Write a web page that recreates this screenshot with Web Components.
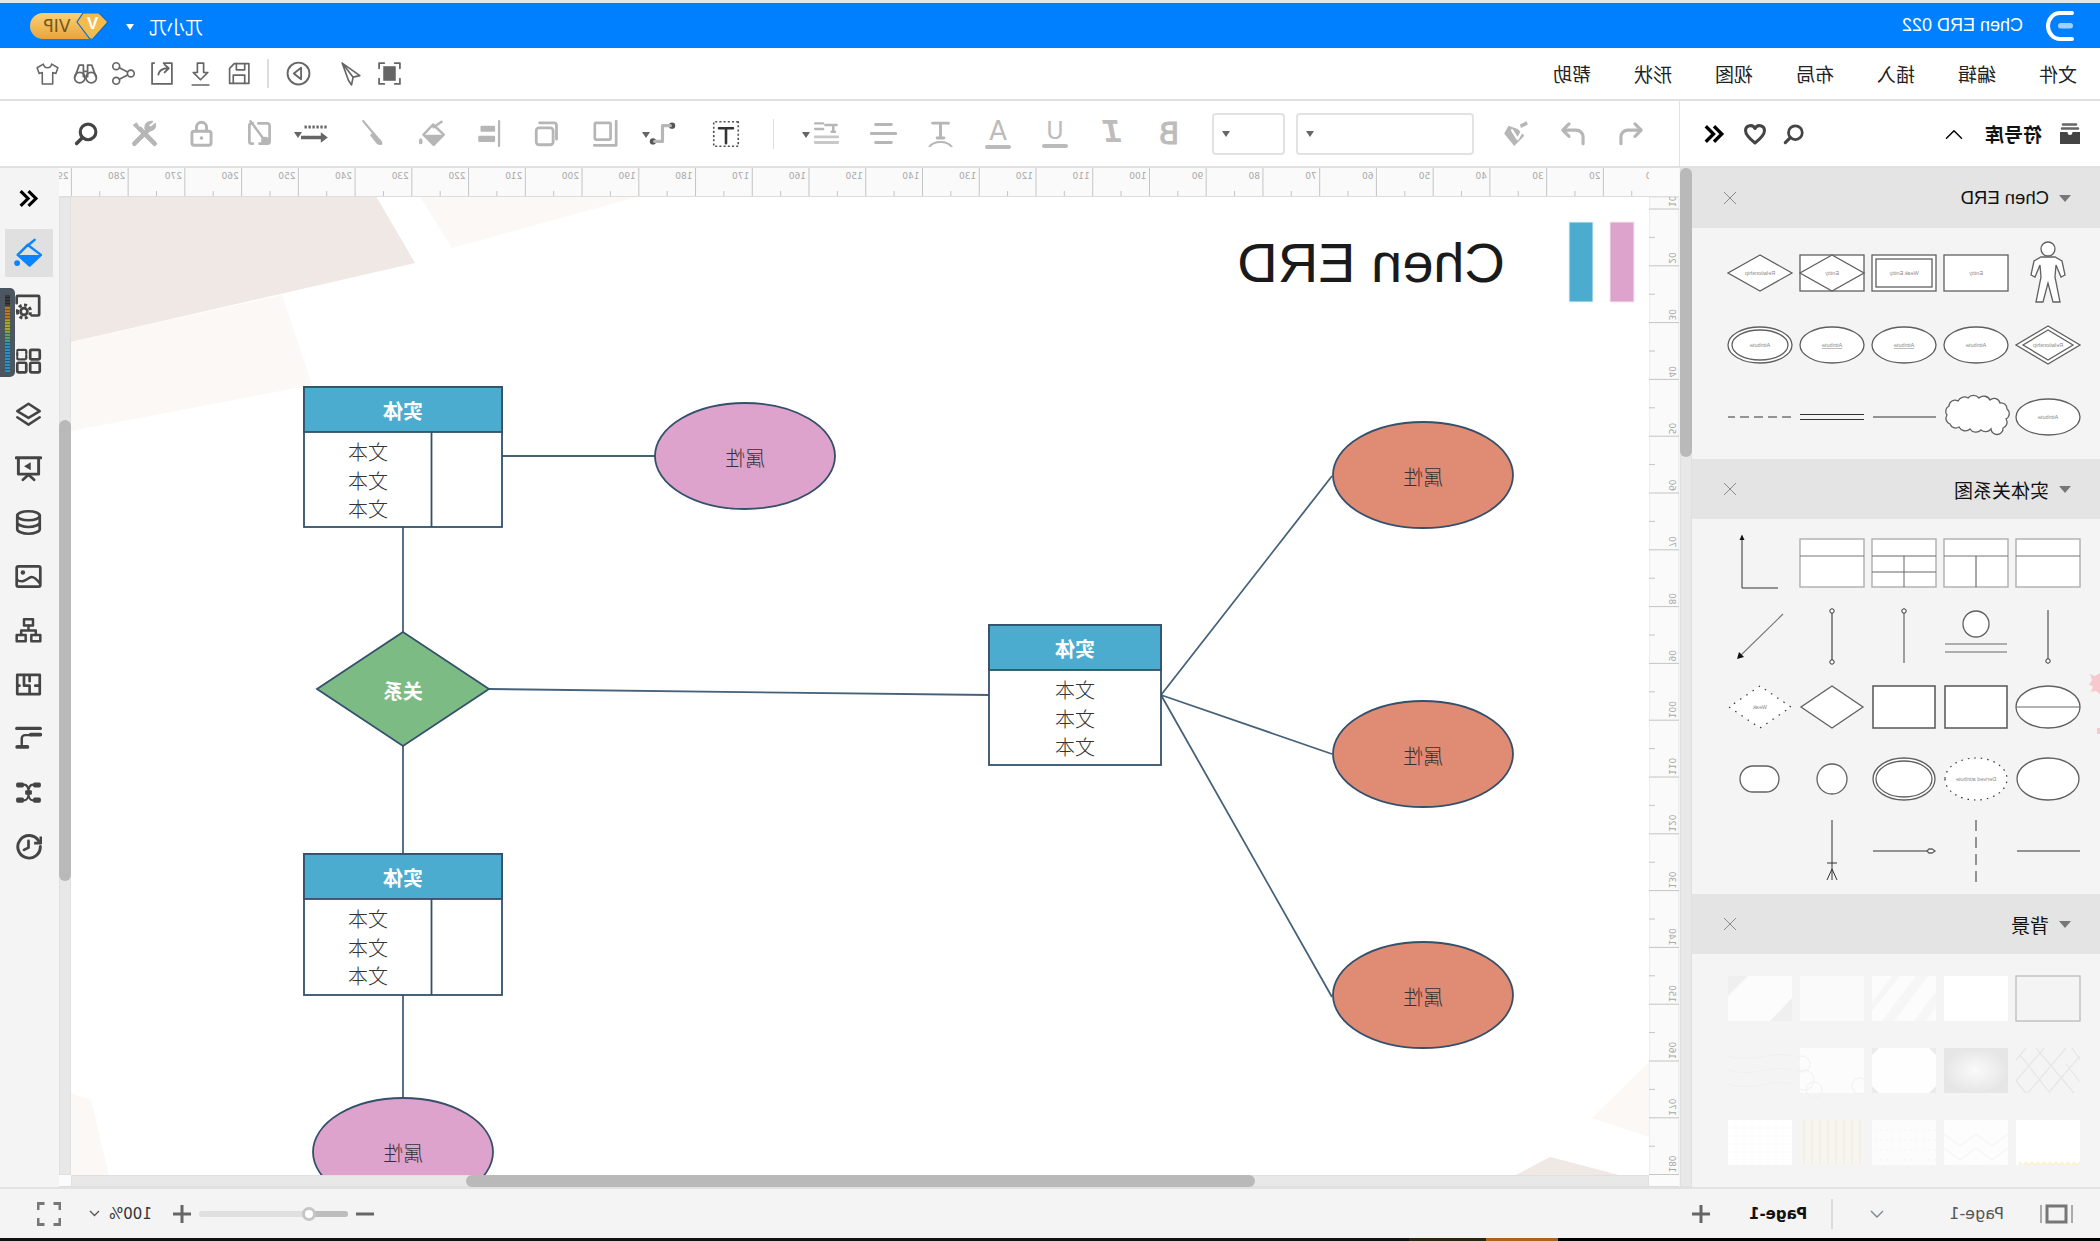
<!DOCTYPE html>
<html lang="zh">
<head>
<meta charset="utf-8">
<title>Chen ERD 022</title>
<style>
  html, body { margin: 0; padding: 0; background: #f4f4f4; overflow: hidden; }
  body { width: 2100px; height: 1241px; font-family: "Liberation Sans", "Noto Sans CJK SC", sans-serif; }
</style>
</head>
<body>
<edraw-app>
  <title-bar></title-bar>
  <menu-bar></menu-bar>
  <tool-bar></tool-bar>
  <main-row>
    <symbol-panel>
      <panel-section label="Chen ERD" height="231" pad="9" size="18.5">
        <shape-cell kind="person"></shape-cell><shape-cell kind="entity"></shape-cell><shape-cell kind="weak"></shape-cell><shape-cell kind="assoc"></shape-cell><shape-cell kind="rel"></shape-cell>
        <shape-cell kind="rel2"></shape-cell><shape-cell kind="attr"></shape-cell><shape-cell kind="attrU"></shape-cell><shape-cell kind="attrU"></shape-cell><shape-cell kind="attr2"></shape-cell>
        <shape-cell kind="attr"></shape-cell><shape-cell kind="cloud"></shape-cell><shape-cell kind="line"></shape-cell><shape-cell kind="line2"></shape-cell><shape-cell kind="dash"></shape-cell>
      </panel-section>
      <panel-section label="实体关系图" height="375" pad="8" size="19">
        <shape-cell kind="tbl"></shape-cell><shape-cell kind="tblSplit"></shape-cell><shape-cell kind="tblGrid"></shape-cell><shape-cell kind="tbl"></shape-cell><shape-cell kind="axis"></shape-cell>
        <shape-cell kind="vBottom"></shape-cell><shape-cell kind="circleLines"></shape-cell><shape-cell kind="vTop"></shape-cell><shape-cell kind="vBoth"></shape-cell><shape-cell kind="diag"></shape-cell>
        <shape-cell kind="ellLine"></shape-cell><shape-cell kind="box"></shape-cell><shape-cell kind="box"></shape-cell><shape-cell kind="dia"></shape-cell><shape-cell kind="weakDia"></shape-cell>
        <shape-cell kind="ell"></shape-cell><shape-cell kind="derived"></shape-cell><shape-cell kind="ell2"></shape-cell><shape-cell kind="circle"></shape-cell><shape-cell kind="pill"></shape-cell>
        <shape-cell kind="line"></shape-cell><shape-cell kind="vDash"></shape-cell><shape-cell kind="hDot"></shape-cell><shape-cell kind="crow"></shape-cell><shape-cell></shape-cell>
      </panel-section>
      <panel-section label="背景" height="233" pad="8" size="19">
        <shape-cell kind="bgOutline"></shape-cell><shape-cell kind="bgWhite"></shape-cell><shape-cell kind="bgStripes"></shape-cell><shape-cell kind="bgSoft"></shape-cell><shape-cell kind="bgCorners"></shape-cell>
        <shape-cell kind="bgCross"></shape-cell><shape-cell kind="bgRadial"></shape-cell><shape-cell kind="bgVignette"></shape-cell><shape-cell kind="bgCircles"></shape-cell><shape-cell kind="bgWaves"></shape-cell>
        <shape-cell kind="bgYellow"></shape-cell><shape-cell kind="bgZig"></shape-cell><shape-cell kind="bgDots"></shape-cell><shape-cell kind="bgBeige"></shape-cell><shape-cell kind="bgGrid"></shape-cell>
      </panel-section>
    </symbol-panel>
    <scroll-v top="0" len="289"></scroll-v>
    <editor-area>
      <ruler-corner></ruler-corner>
      <ruler-top></ruler-top>
      <ruler-side></ruler-side>
      <erd-canvas></erd-canvas>
      <scroll-v top="223" len="461"></scroll-v>
      <ruler-corner></ruler-corner>
      <scroll-h></scroll-h>
      <ruler-corner></ruler-corner>
    </editor-area>
    <side-rail></side-rail>
  </main-row>
  <status-bar></status-bar>
</edraw-app>

<script>
// every icon is drawn as the plain (unflipped) app has it, the whole page is flipped by edraw-app
const ICONS = {
  search: '<circle cx="10.5" cy="10.5" r="7.5" stroke-width="3"/><path d="M16 16l5.5 5.5" stroke-width="3.4"/>',
  tools: '<path d="M21 21L8 8" stroke-width="4.2"/><path d="M3 21L16 8" stroke-width="4.2"/><path d="M9.5 9A5 5 0 0 1 2.500 3.500L6.500 7 9 4.500 5 1.500a5.500 5.500 0 0 1 6.500 6z" fill="currentColor" stroke-width="1.500"/><path d="M15 8.500L19 2l3.500 2.500L17 10z" fill="currentColor" stroke="none"/>',
  lock: '<rect x="3.5" y="10" width="17" height="12.5" rx="2" stroke-width="2.6"/><path d="M7.5 10V6.5a4.5 4.5 0 0 1 9 0V10" stroke-width="2.6"/><circle cx="12" cy="16" r="1.6" fill="currentColor" stroke="none"/>',
  noimg: '<path d="M13 3H5a2 2 0 0 0-2 2v14a2 2 0 0 0 2 2h7M18 3h1a2 2 0 0 1 2 2v14a2 2 0 0 1-2 2h-1" stroke-width="2.400"/><path d="M20 1L9 16" stroke-width="2.200"/><circle cx="7" cy="18.500" r="3.600" fill="currentColor" stroke="none"/>',
  linestyle: '<path d="M2 6h20" stroke="#666" stroke-width="2.400" stroke-dasharray="2 1.400" stroke-linecap="butt"/><path d="M6 15h18" stroke="#666" stroke-width="3"/><path d="M7 10.500L1 15l6 4.500z" fill="#666" stroke="none"/>',
  brush: '<path d="M22 1L12 13" stroke-width="2"/><path d="M13 10.500l3 3-6 7.500c-2 1.500-5 1.500-5 0 0-2 1-3 2-4z" fill="currentColor" stroke="none"/>',
  fill: '<path d="M4 1.500l7 5M11.500 4L2 13l9 9 9-9z" stroke-width="2.200"/><path d="M2 13h18l-9 9z" fill="currentColor" stroke="none"/><path d="M23 17c1 2 1 4-.5 4s-1.500-2-.5-4z" fill="currentColor" stroke-width="1"/>',
  align: '<path d="M3.500 1v22" stroke-width="2"/><rect x="7" y="5" width="13" height="5.500" rx="1" fill="currentColor" stroke="none"/><rect x="7" y="14" width="15" height="5.500" rx="1" fill="currentColor" stroke="none"/>',
  copy: '<rect x="7" y="7" width="15" height="15" rx="2.500" stroke-width="2.500"/><path d="M4 17V4.500a2 2 0 0 1 2-2h13" stroke-width="2.500"/>',
  frame: '<rect x="7.500" y="2.500" width="14" height="15" rx="1" stroke-width="2.400"/><path d="M2.500 1v21.500H22" stroke-width="2.400"/>',
  connector: '<circle cx="3.500" cy="5" r="2.800" fill="#555" stroke="none"/><circle cx="20.500" cy="19" r="2.800" fill="#555" stroke="none"/><path d="M5 5h7v14h7" stroke-width="2.800"/>',
  tbox: '<rect x="1.500" y="1.500" width="21" height="21" stroke="#555" stroke-dasharray="1.800 1.800" stroke-width="1.400" stroke-linecap="butt"/><path d="M6 7h12M12 7v13" stroke="#333" stroke-width="2.200"/>',
  spacing: '<path d="M2 4.500h10M5 4.500v6M3.500 10.500h3" transform="translate(1 0)" stroke-width="2.200"/><path d="M15 3h7M15 8h7" stroke-width="2.200"/><path d="M2 15h20M2 20h20" stroke-width="2.600" stroke="#c8c8c8"/>',
  center: '<path d="M5 4h14M1 12h22M5 20h14" stroke-width="2.600"/>',
  tarc: '<path d="M5 3v-.200h14M12 3v13M9 16h6" stroke-width="2.600"/><path d="M2 24c4-6 16-6 20 0" stroke-width="1.800"/>',
  paint: '<path d="M11 8l8-3 4 7-9 11-9-9z" fill="currentColor" stroke="none"/><path d="M3 1l6 3-1 3-6-3z" fill="currentColor" stroke="none"/><path d="M6 8l5 9 5-8" stroke="#fff" stroke-width="2"/>',
  undo: '<path d="M8 3.500L2.500 9 8 14.500" stroke-width="2.800"/><path d="M3 9h11.500a6 6 0 0 1 6 6v6" stroke-width="2.800"/>',
  redo: '<path d="M16 3.500L21.500 9 16 14.500" stroke-width="2.800"/><path d="M21 9H9.500a6 6 0 0 0-6 6v6" stroke-width="2.800"/>',
  chevrons: '<path d="M12 3.500L3.500 12l8.500 8.500M21 3.500L12.500 12l8.500 8.500" stroke-width="3.600" stroke-linecap="butt" stroke-linejoin="miter"/>',
  heart: '<path d="M12 21C5 15.500 2.500 12 2.500 8.500A5 5 0 0 1 12 6.500a5 5 0 0 1 9.500 2C21.500 12 19 15.500 12 21z" stroke-width="3"/>',
  up: '<path d="M3 17L12 8l9 9" stroke-width="1.700"/>',
  library: '<path d="M6 2.500h13M4 6.500h16" stroke="#666" stroke-width="2.600"/><path d="M2 10h7.500c0 2 1 3 2.500 3s2.500-1 2.500-3H22v12H2z" fill="currentColor" stroke="none"/>',
  shirt: '<path d="M8 3L2 6.500l2 5.500 3-1v11h10V11l3 1 2-5.500L16 3c-.500 2.500-2 3.500-4 3.500S8.500 5.500 8 3z" stroke-width="1.500"/>',
  binoculars: '<circle cx="6.500" cy="16" r="5" stroke-width="1.700"/><circle cx="17.500" cy="16" r="5" stroke-width="1.700"/><path d="M2 15L6 4h4v11M22 15L18 4h-4v11M10 10h4M11.500 16h1" stroke-width="1.700"/>',
  share: '<circle cx="5" cy="12" r="3.300" stroke-width="1.600"/><circle cx="19" cy="5" r="3.300" stroke-width="1.600"/><circle cx="19" cy="19" r="3.300" stroke-width="1.600"/><path d="M8 10.500l8-4M8 13.500l8 4" stroke-width="1.600"/>',
  exporting: '<path d="M11 2H3v20h19V2h-2" stroke-width="1.700"/><path d="M8 11c1-4 4-6 9-6M14 1.500L18 5l-4 4" transform="matrix(-1 0 0 1 24 2)" stroke-width="1.800"/>',
  download: '<path d="M9 2h6v9h4l-7 7-7-7h4zM4 23h16" stroke-width="1.600"/>',
  save: '<path d="M3 2.500h14l4.500 4.500v14.500H3z" stroke-width="1.600"/><path d="M7 2.500v6h8v-6M7 21.500v-8h11v8" stroke-width="1.600"/>',
  play: '<circle cx="12" cy="12" r="10.500" stroke-width="1.800"/><path d="M9.500 6.500l7 5.500-7 5.500z" stroke-width="1.800"/>',
  cursor: '<path d="M20 2L3 14l6.500 1.500L11 23l3-4.500zM9.500 15.500L20 2" stroke-width="1.600"/>',
  focus: '<path d="M2 7V2h5M17 2h5v5M22 17v5h-5M7 22H2v-5" stroke-width="1.700"/><rect x="6" y="5" width="12" height="14" fill="currentColor" stroke="none"/>',
  bucket: '<path d="M7.500 1.500l5.500 4.500" stroke-width="2"/><path d="M13 5.500L2.500 13.500 11.500 22 21 13.500z" stroke-width="2"/><path d="M2.500 13.500H21L12.800 21c-1 .8-1.800 .8-2.800 0z" fill="currentColor" stroke="none"/><circle cx="21.500" cy="20" r="2.300" fill="currentColor" stroke="none"/>',
  screen: '<path d="M9 20H3.500a1 1 0 0 1-1-1V3.500a1 1 0 0 1 1-1h18a1 1 0 0 1 1 1V9" stroke-width="2.400"/><circle cx="16" cy="16.500" r="3" stroke-width="2.400"/><circle cx="16" cy="16.500" r="5.800" stroke-width="2.800" stroke-dasharray="2.600 2.200" stroke-linecap="butt"/>',
  grid: '<rect x="2" y="2.500" width="8.500" height="8.500" rx="1" stroke-width="2.400"/><rect x="14" y="2.500" width="8" height="8.500" rx="1" stroke-width="2" stroke-dasharray="3 1.500"/><rect x="2" y="14" width="8.500" height="8.500" rx="1" stroke-width="2.400"/><rect x="14" y="14" width="8" height="8.500" rx="1" stroke-width="2.400"/>',
  layers: '<path d="M12 2.500L22 9l-10 6L2 9z" stroke-width="2.200"/><path d="M2 14.500L12 21l10-6.500" stroke-width="2.200"/>',
  board: '<path d="M1 2.500h22" stroke-width="2.600"/><path d="M3 3v14h18V3" stroke-width="2.600"/><path d="M7 22l5-4.500 5 4.500" stroke-width="2.400"/><path d="M10 6.500l6 3.500-6 3.500z" fill="currentColor" stroke="none"/>',
  db: '<ellipse cx="12" cy="6" rx="10" ry="4" stroke-width="2.400"/><path d="M2 6v12c0 2 4.500 4 10 4s10-2 10-4V6M2 12c0 2 4.500 4 10 4s10-2 10-4" stroke-width="2.400"/>',
  picture: '<rect x="1.500" y="3" width="21" height="18" rx="1.500" stroke-width="2.400"/><circle cx="17" cy="8.500" r="2" fill="currentColor" stroke="none"/><path d="M2 18c3-4 6-7 9-5 3 2 7 5 11 2" stroke-width="2.200"/>',
  org: '<rect x="8" y="2" width="8" height="5.500" stroke-width="2.200"/><rect x="1.500" y="16" width="8" height="5.500" stroke-width="2.200"/><rect x="14.500" y="16" width="8" height="5.500" stroke-width="2.200"/><path d="M12 7.500V12M5.500 16v-4h13v4" stroke-width="2.200"/>',
  plan: '<path d="M2 3.500h20v17H2zM2 13h4M11 13h5V8M16 3.500V8M22 13h-2M11 13v7.500M11 3.500V9" stroke-width="2.400"/>',
  flow: '<path d="M1.500 3h21" stroke-width="2.800"/><path d="M1.500 8.500H10" stroke-width="3.400"/><path d="M10 9h5a3 3 0 0 1 3 3v5" stroke-width="2.200"/><path d="M13 19.500h9" stroke-width="3.400"/>',
  mindmap: '<rect x="9" y="10" width="6" height="4" rx="1" fill="currentColor" stroke="none"/><rect x="1" y="3" width="7" height="4.500" rx="1.500" fill="currentColor" stroke="none"/><rect x="16" y="3" width="7" height="4.500" rx="1.500" fill="currentColor" stroke="none"/><rect x="1" y="16.500" width="7" height="4.500" rx="1.500" fill="currentColor" stroke="none"/><rect x="16" y="16.500" width="7" height="4.500" rx="1.500" fill="currentColor" stroke="none"/><path d="M8 5c3 0 4 3 4 7s1 7 4 7M16 5c-3 0-4 3-4 7s-1 7-4 7" stroke-width="1.800"/>',
  history: '<path d="M21 7A10 10 0 1 0 22.500 12" transform="matrix(-1 0 0 1 24 0)" stroke-width="2.600"/><path d="M1 3v6h6" stroke-width="2.400" stroke-linecap="butt"/><path d="M12 7v6l-4 2" transform="matrix(-1 0 0 1 24 0)" stroke-width="2.400"/>'
};

class UiIcon extends HTMLElement {
  constructor() {
    super();
    this.attachShadow({ mode: "open" });
  }
  connectedCallback() {
    const size = this.getAttribute("size") || 24;
    const name = this.getAttribute("name");
    this.shadowRoot.innerHTML = `
      <style>
        :host { display: inline-flex; flex: none; color: #444; line-height: 0; }
        :host([tone="off"]) { color: #b6b6b6; }
        :host([tone="mid"]) { color: #666; }
        :host([tone="ink"]) { color: #000; }
        :host([tone="blue"]) { color: #0a84ff; }
      </style>
      <svg width="${size}" height="${size}" viewBox="0 0 24 24" fill="none" stroke="currentColor" stroke-width="2" stroke-linecap="round" stroke-linejoin="round">${ICONS[name] || ""}</svg>`;
  }
}
customElements.define("ui-icon", UiIcon);

class EdrawApp extends HTMLElement {
  constructor() {
    super();
    this.attachShadow({ mode: "open" });
    // the reference is a left-right mirrored picture, so the plain layout gets flipped here
    this.shadowRoot.innerHTML = `
      <style>
        :host { display: flex; flex-direction: column; width: 2100px; height: 1241px; overflow: hidden;
                transform: scaleX(-1); background: #f4f4f4; color: #222; }
        .sliver { height: 3px; background: #e6e6e6; flex: none; }
        .film { height: 3px; flex: none; background: linear-gradient(90deg, #000 542px, #a86420 542px, #a86420 614px, #2a2410 614px, #2a2410 691px, #111 691px); }
      </style>
      <div class="sliver"></div>
      <slot></slot>
      <div class="film"></div>`;
  }
}
customElements.define("edraw-app", EdrawApp);

class TitleBar extends HTMLElement {
  constructor() {
    super();
    this.attachShadow({ mode: "open" });
    this.shadowRoot.innerHTML = `
      <style>
        :host { display: flex; align-items: center; height: 45px; flex: none; background: #0080ff; color: #fff; padding: 0 30px 0 26px; box-sizing: border-box; }
        .doc { margin-left: 23px; font: 18px "Liberation Sans", sans-serif; }
        .user { margin-left: auto; font: 18px "Noto Sans CJK SC", sans-serif; }
        .caret { margin: 2px 0 0 15px; border: 4.5px solid transparent; border-top: 6px solid #fff; border-bottom: 0; }
        .vip { margin-left: 17px; display: block; }
      </style>
      <svg width="28" height="32" viewBox="0 0 28 32" fill="none">
        <path d="M2 3h12a12 13 0 0 1 0 26H2" stroke="#fff" stroke-width="4" stroke-linecap="round"/>
        <rect x="1" y="13" width="15" height="5.500" rx="2.700" fill="#9fd0ff"/>
      </svg>
      <span class="doc">Chen ERD 022</span>
      <span class="user">兀小兀</span>
      <span class="caret"></span>
      <svg class="vip" width="79" height="26" viewBox="0 0 79 26">
        <defs><linearGradient id="gold" x1="0" y1="0" x2="0" y2="1"><stop offset="0" stop-color="#fbd078"/><stop offset="1" stop-color="#e8a53a"/></linearGradient></defs>
        <path d="M20 0h46a13 13 0 0 1 0 26H20z" fill="url(#gold)"/>
        <path d="M10 0h16l6 9-13 17h-3L1 9z" fill="#f6bb4a" stroke="#0a6fd8" stroke-width="1.200"/>
        <text x="16.500" y="16" text-anchor="middle" font-family="Liberation Sans" font-weight="700" font-size="17" fill="#fff">V</text>
        <text x="52" y="19" text-anchor="middle" font-family="DejaVu Sans" font-size="17" fill="#75561c">VIP</text>
      </svg>`;
  }
}
customElements.define("title-bar", TitleBar);

class MenuBar extends HTMLElement {
  constructor() {
    super();
    this.attachShadow({ mode: "open" });
    const words = ["文件", "编辑", "插入", "布局", "视图", "形状", "帮助"];
    const cell = (name) => `<span class="cell"><ui-icon name="${name}" size="25" tone="mid"></ui-icon></span>`;
    this.shadowRoot.innerHTML = `
      <style>
        :host { display: flex; align-items: center; height: 53px; flex: none; box-sizing: border-box; background: #fff;
                border-bottom: 2px solid #e0e0e0; padding: 0 28px 0 23px; }
        nav { display: flex; gap: 43px; font: 19px "Noto Sans CJK SC", sans-serif; color: #222; }
        .icons { margin-left: auto; display: flex; align-items: center; }
        .cell { width: 38.400px; display: flex; justify-content: center; }
        .play { margin-left: 14px; }
        .rule { width: 2px; height: 29px; background: #ddd; margin: 0 9px 0 10px; }
      </style>
      <nav>${words.map((w) => `<span>${w}</span>`).join("")}</nav>
      <div class="icons">
        ${cell("focus")}${cell("cursor")}
        <span class="cell play"><ui-icon name="play" size="25" tone="mid"></ui-icon></span>
        <span class="rule"></span>
        ${cell("save")}${cell("download")}${cell("exporting")}${cell("share")}${cell("binoculars")}${cell("shirt")}
      </div>`;
  }
}
customElements.define("menu-bar", MenuBar);

class ToolBtn extends HTMLElement {
  constructor() {
    super();
    this.attachShadow({ mode: "open" });
    const offset = this.getAttribute("caret");
    this.shadowRoot.innerHTML = `
      <style>
        :host { display: flex; position: relative; width: 57px; height: 65px; align-items: center; justify-content: center; flex: none; color: #b6b6b6; }
        :host([wide]) { width: 57.600px; }
        .caret { position: absolute; top: 31px; border: 4.500px solid transparent; border-top: 6px solid #666; border-bottom: 0; }
      </style>
      <slot></slot>
      ${offset ? `<span class="caret" style="left: calc(50% + ${offset}px)"></span>` : ""}`;
  }
}
customElements.define("tool-btn", ToolBtn);

class FontSelect extends HTMLElement {
  constructor() {
    super();
    this.attachShadow({ mode: "open" });
    this.shadowRoot.innerHTML = `
      <style>
        :host { display: flex; align-items: center; justify-content: flex-end; height: 42px; box-sizing: border-box; flex: none;
                border: 2px solid #e2e2e2; border-radius: 4px; padding-right: 8px; background: #fff; }
        span { border: 4.500px solid transparent; border-top: 6px solid #666; border-bottom: 0; }
      </style>
      <span></span>`;
  }
}
customElements.define("font-select", FontSelect);

class ToolBar extends HTMLElement {
  constructor() {
    super();
    this.attachShadow({ mode: "open" });
    const btn = (name, caret, size = 27, tone = "off", wide = false) =>
      `<tool-btn ${wide ? "wide" : ""} ${caret ? `caret="${caret}"` : ""}><ui-icon name="${name}" size="${size}" tone="${tone}"></ui-icon></tool-btn>`;
    this.shadowRoot.innerHTML = `
      <style>
        :host { display: flex; height: 67px; flex: none; background: #fff; border-bottom: 2px solid #e0e0e0; box-sizing: border-box; }
        .lib { width: 421px; flex: none; display: flex; align-items: center; box-sizing: border-box; padding-left: 18px; border-right: 1px solid #e2e2e2; }
        .lib b { margin: 0 21px 0 16px; font: 700 19px "Noto Sans CJK SC", sans-serif; color: #111; }
        .lib .far { margin-left: 139px; }
        .lib .next { margin-left: 16px; }
        .lib .last { margin-left: 18px; }
        .tools { display: flex; align-items: center; padding-left: 19.500px; }
        .gap { margin-left: 14.500px; }
        .gap11 { margin-left: 11px; }
        .rule { width: 1px; height: 30px; background: #ddd; margin: 0 19px 0 24px; }
        .mark { color: #bcbcbc; display: inline-flex; flex-direction: column; align-items: center; line-height: 1; font-family: "DejaVu Sans", sans-serif; }
        .mark::after { content: ""; display: block; height: 3.500px; border-radius: 2px; background: #bbb; margin-top: 1px; width: 26px; }
        .plain::after { display: none; }
      </style>
      <div class="lib">
        <ui-icon name="library" size="24"></ui-icon>
        <b>符号库</b>
        <ui-icon name="up" size="20" tone="ink"></ui-icon>
        <ui-icon class="far" name="search" size="22"></ui-icon>
        <ui-icon class="next" name="heart" size="24"></ui-icon>
        <ui-icon class="last" name="chevrons" size="22" tone="ink"></ui-icon>
      </div>
      <div class="tools">
        ${btn("undo")}${btn("redo")}${btn("paint")}
        <font-select class="gap" style="width:178px"></font-select>
        <font-select class="gap11" style="width:73px"></font-select>
        <tool-btn class="gap"><span class="mark plain" style="font-size:30px;-webkit-text-stroke:1px #bcbcbc">B</span></tool-btn>
        <tool-btn><span class="mark plain" style="font:italic 700 33px 'Liberation Mono',monospace">I</span></tool-btn>
        <tool-btn><span class="mark" style="font-size:24px">U</span></tool-btn>
        <tool-btn><span class="mark" style="font-size:26px">A</span></tool-btn>
        ${btn("tarc")}${btn("center")}${btn("spacing", "17")}
        <span class="rule"></span>
        <tool-btn style="margin-right:6px"><ui-icon name="tbox" size="28" tone="off"></ui-icon></tool-btn>
        ${btn("connector", "13", 27, "off", true)}${btn("frame", "", 27, "off", true)}${btn("copy", "", 27, "off", true)}${btn("align", "", 27, "off", true)}${btn("fill", "", 27, "off", true)}${btn("brush", "", 27, "off", true)}
        <tool-btn wide caret="15"><ui-icon name="linestyle" size="28" tone="mid" style="margin-left:5px"></ui-icon></tool-btn>
        ${btn("noimg", "", 27, "off", true)}${btn("lock", "", 27, "off", true)}${btn("tools", "", 27, "off", true)}${btn("search", "", 25, "dark", true)}
      </div>`;
  }
}
customElements.define("tool-bar", ToolBar);

class MainRow extends HTMLElement {
  constructor() {
    super();
    this.attachShadow({ mode: "open" });
    this.shadowRoot.innerHTML = `
      <style>:host { display: flex; height: 1019px; flex: none; }</style>
      <slot></slot>`;
  }
}
customElements.define("main-row", MainRow);

class SymbolPanel extends HTMLElement {
  constructor() {
    super();
    this.attachShadow({ mode: "open" });
    this.shadowRoot.innerHTML = `
      <style>
        :host { display: block; position: relative; width: 408px; flex: none; background: #f4f4f4; }
        svg { position: absolute; left: 0; top: 505px; }
      </style>
      <slot></slot>
      <svg width="11" height="62" viewBox="0 0 11 62"><path d="M0 0l5 3 5-2-2 6 3 5-4 1 2 6-5-1-4 3zM0 55h3v6H0z" fill="#f7c9cf"/></svg>`;
  }
}
customElements.define("symbol-panel", SymbolPanel);

class PanelSection extends HTMLElement {
  constructor() {
    super();
    this.attachShadow({ mode: "open" });
    const h = this.getAttribute("height");
    const pad = this.getAttribute("pad");
    this.shadowRoot.innerHTML = `
      <style>
        :host { display: block; }
        header { display: flex; align-items: center; height: 60px; background: #e4e4e4; padding-left: 29px; font-size: ${this.getAttribute("size")}px; color: #111; }
        .caret { border: 6px solid transparent; border-top: 7px solid #777; border-bottom: 0; margin-right: 10px; }
        .x { margin-left: auto; margin-right: 31px; }
        .body { display: grid; grid-template-columns: repeat(5, 72px); grid-auto-rows: 72px; box-sizing: border-box;
                height: ${h}px; padding: ${pad}px 0 0 16px; background: #f4f4f4; }
      </style>
      <header>
        <span class="caret"></span><span>${this.getAttribute("label")}</span>
        <svg class="x" width="14" height="14" viewBox="0 0 14 14"><path d="M1 1l12 12M13 1L1 13" stroke="#8a8a8a" stroke-width="1"/></svg>
      </header>
      <div class="body"><slot></slot></div>`;
  }
}
customElements.define("panel-section", PanelSection);

// thumbnails of the symbol library, on a 72 x 72 cell
const S = 'fill="#fff" stroke="#606060" stroke-width="1.300"';
const L = 'fill="none" stroke="#333" stroke-width="1"';
const cap = (t, y = 36, extra = "") =>
  `<text x="36" y="${y}" text-anchor="middle" dominant-baseline="central" font-family="Liberation Sans" font-size="5.500" fill="#8a8a8a" ${extra}>${t}</text>`;
const ell = (rx = 32, ry = 18, a = S) => `<ellipse cx="36" cy="36" rx="${rx}" ry="${ry}" ${a}/>`;
const dot = (x, y) => `<circle cx="${x}" cy="${y}" r="2.200" fill="#fff" stroke="#333" stroke-width="1"/>`;
const bg = (inner, fill = "#fff") => `<rect x="4" y="14" width="64" height="45" fill="${fill}"/>${inner}`;
const SHAPES = {
  person: `<circle cx="36" cy="12" r="7" ${S}/><path d="M29 20h14l7 4 3 14-4 2-5-12-1 12 5 25h-7l-5-19-5 19h-7l5-25-1-12-5 12-4-2 3-14z" ${S}/>`,
  entity: `<rect x="4" y="18" width="64" height="36" ${S}/>${cap("Entity")}`,
  weak: `<rect x="4" y="18" width="64" height="36" ${S}/><rect x="8" y="22" width="56" height="28" ${S}/>${cap("Weak Entity")}`,
  assoc: `<rect x="4" y="18" width="64" height="36" ${S}/><path d="M36 18l32 18-32 18L4 36z" ${S}/>${cap("Entity")}`,
  rel: `<path d="M36 18l32 18-32 18L4 36z" ${S}/>${cap("Relationship")}`,
  rel2: `<path d="M36 17l32 19-32 19L4 36z" ${S}/><path d="M36 21l25 15-25 15-25-15z" ${S}/>${cap("Relationship")}`,
  attr: ell() + cap("Attribute"),
  attrU: ell() + cap("Attribute", 36, 'text-decoration="underline"'),
  attr2: ell() + ell(28, 15) + cap("Attribute"),
  cloud: `<path d="M9 47a6 6 0 0 1-3-9 6 6 0 0 1-1-10 6 6 0 0 1 7-6 6 6 0 0 1 10-3 7 7 0 0 1 11-2 7 7 0 0 1 11 0 7 7 0 0 1 10 3 6 6 0 0 1 9 5 6 6 0 0 1 2 9 6 6 0 0 1-3 9 6 6 0 0 1-9 3 7 7 0 0 1-11 2 7 7 0 0 1-11 1 7 7 0 0 1-10-1 6 6 0 0 1-12-1z" ${S}/>`,
  line: `<path d="M4 36h63" ${L}/>`,
  line2: `<path d="M4 33.500h64M4 38.500h64" ${L} stroke-width="1.200"/>`,
  dash: `<path d="M5 36h63" ${L} stroke-dasharray="9 5"/>`,
  tbl: `<rect x="4" y="12" width="64" height="48" fill="#fff" stroke="#a8a8a8" stroke-width="1.300"/><path d="M4 29h64" stroke="#777"/>`,
  tblSplit: `<rect x="4" y="12" width="64" height="48" fill="#fff" stroke="#a8a8a8" stroke-width="1.300"/><path d="M4 29h64" stroke="#777"/><path d="M36 29v31" stroke="#555"/>`,
  tblGrid: `<rect x="4" y="12" width="64" height="48" fill="#fff" stroke="#a8a8a8" stroke-width="1.300"/><path d="M4 29h64M4 45h64M36 29v31" stroke="#666"/>`,
  axis: `<path d="M54 10v51H18" ${L} stroke-width="1.200"/><path d="M51.500 13L54 7.500 56.500 13z" fill="#111"/>`,
  vBottom: `<path d="M36 11v49" stroke="#555" stroke-width="1.200"/>${dot(36, 62)}`,
  circleLines: `<circle cx="36" cy="25" r="13" ${S}/><path d="M5 45h62M5 53h62" stroke="#666" stroke-width="1.200"/>`,
  vTop: `<path d="M36 14v50" stroke="#666" stroke-width="1.200"/>${dot(36, 12)}`,
  vBoth: `<path d="M36 13v49" stroke="#222" stroke-width="1"/>${dot(36, 12)}${dot(36, 63)}`,
  diag: `<path d="M13 15l44 43" stroke="#777" stroke-width="1.100"/><path d="M59 60l-7-2 5-5z" fill="#111"/>`,
  ellLine: ell(32, 21) + `<path d="M4 36h64" stroke="#666" stroke-width="1.200"/>`,
  box: `<rect x="5" y="15" width="62" height="42" fill="#fff" stroke="#606060" stroke-width="1.600"/>`,
  dia: `<path d="M36 15l31 21-31 21L5 36z" ${S}/>`,
  weakDia: `<path d="M36 15l31 21-31 21L5 36z" fill="#fff" stroke="#333" stroke-width="1.200" stroke-dasharray="1.500 6"/>${cap("Weak")}`,
  ell: ell(31, 21),
  derived: ell(31, 21, 'fill="#fff" stroke="#333" stroke-width="1.200" stroke-dasharray="1.500 5"') + cap("Derived attribute"),
  ell2: ell(31, 21) + ell(28, 18),
  circle: `<circle cx="36" cy="36" r="15" ${S}/>`,
  pill: `<rect x="17" y="23" width="39" height="26" rx="13" ${S}/>`,
  vDash: `<path d="M36 5v63" ${L} stroke-dasharray="11 6"/>`,
  hDot: `<path d="M12 36h55" ${L}/><path d="M5 36l3-2h3l2 2-2 2H8z" ${S}/>`,
  crow: `<path d="M36 5v60M31 48h10M36 54l-5 11M36 54l5 11" ${L}/>`,
  bgOutline: `<rect x="4" y="14" width="64" height="45" fill="none" stroke="#bbb" stroke-width="1.300"/>`,
  bgWhite: bg(""),
  bgStripes: bg(`<path d="M12 14h12l34 45H46zM40 14h8l20 27v8zM4 30l22 29H14L4 45z" fill="#f6f6f6"/>`, "#fcfcfc"),
  bgSoft: bg("", "#fafafa"),
  bgCorners: bg(`<path d="M48 14h20v20zM4 36v23h22z" fill="#efefef"/>`, "#fcfcfc"),
  bgCross: `<path d="M4 22l30 35M18 14l38 45M40 14l28 33M58 14l10 12M4 48l14-18 M10 59L48 14M34 59l30-38M58 59l10-12M4 26l8-12" stroke="#e6e6e6" stroke-width="1.200" fill="none"/>`,
  bgRadial: `<defs><radialGradient id="r"><stop offset="0" stop-color="#fafafa"/><stop offset="1" stop-color="#e6e6e6"/></radialGradient></defs><rect x="4" y="14" width="64" height="45" fill="url(#r)"/>`,
  bgVignette: bg(`<path d="M4 14h7l-7 7zM68 14h-7l7 7zM4 59h7l-7-7zM68 59h-7l7-7z" fill="#ebebeb"/>`, "#fefefe"),
  bgCircles: bg(`<circle cx="8" cy="52" r="8" fill="none" stroke="#f1f1f1"/><circle cx="54" cy="56" r="8" fill="none" stroke="#f1f1f1"/><circle cx="64" cy="46" r="10" fill="none" stroke="#f1f1f1"/><circle cx="66" cy="30" r="8" fill="none" stroke="#f1f1f1"/>`, "#fcfcfc"),
  bgWaves: `<path d="M4 22c20-6 40 8 64 0M4 36c20-6 40 8 64 0M4 50c20-6 40 8 64 0" fill="none" stroke="#efefef" stroke-width="1.100"/>`,
  bgYellow: bg(`<path d="M4 55l3 3 3-3 3 3 3-3 3 3 3-3 3 3 3-3 3 3 3-3 3 3 3-3 3 3 3-3 3 3 3-3 3 3 3-3 3 3 4-3v4H4z" fill="#fbf3d4"/>`),
  bgZig: bg(`<path d="M4 28l16 12 16-12 16 12 16-12M4 42l16 12 16-12 16 12 16-12" fill="none" stroke="#f5f5f5" stroke-width="1.200"/>`, "#fdfdfd"),
  bgDots: bg(`<path d="M4 24h64M4 34h64M4 44h64M4 54h64" stroke="#f3f3f3" stroke-dasharray="2 4"/>`, "#fcfcfc"),
  bgBeige: bg(`<path d="M8 14v45M16 14v45M24 14v45M32 14v45M40 14v45M48 14v45M56 14v45M64 14v45" stroke="#f1efe6" stroke-width="2"/>`, "#f6f5ef"),
  bgGrid: bg(`<path d="M12 14v45M20 14v45M28 14v45M36 14v45M44 14v45M52 14v45M60 14v45M4 22h64M4 30h64M4 38h64M4 46h64M4 54h64" stroke="#f9faf9" stroke-width=".600"/>`)
};

class ShapeCell extends HTMLElement {
  constructor() {
    super();
    this.attachShadow({ mode: "open" });
  }
  connectedCallback() {
    this.shadowRoot.innerHTML = `
      <style>:host { display: block; width: 72px; height: 72px; line-height: 0; }</style>
      <svg width="72" height="72" viewBox="0 0 72 72">${SHAPES[this.getAttribute("kind")] || ""}</svg>`;
  }
}
customElements.define("shape-cell", ShapeCell);

class ScrollV extends HTMLElement {
  constructor() {
    super();
    this.attachShadow({ mode: "open" });
    this.shadowRoot.innerHTML = `
      <style>
        :host { display: block; width: 12px; flex: none; background: #e8e8e8; box-shadow: inset 0 0 0 1px #e0e0e0; }
        div { margin-top: ${this.getAttribute("top")}px; height: ${this.getAttribute("len")}px; background: #b9b9b9; border-radius: 6px; }
      </style>
      <div></div>`;
  }
}
customElements.define("scroll-v", ScrollV);

class ScrollH extends HTMLElement {
  constructor() {
    super();
    this.attachShadow({ mode: "open" });
    this.shadowRoot.innerHTML = `
      <style>
        :host { display: block; background: #e8e8e8; box-shadow: inset 0 0 0 1px #e0e0e0; }
        div { margin-left: 394px; width: 789px; height: 12px; background: #b9b9b9; border-radius: 6px; }
      </style>
      <div></div>`;
  }
}
customElements.define("scroll-h", ScrollH);

class RulerCorner extends HTMLElement {
  constructor() {
    super();
    this.attachShadow({ mode: "open" });
    this.shadowRoot.innerHTML = `<style>:host { display: block; background: #fbfbfb; box-sizing: border-box; border-bottom: 1px solid #ddd; }</style>`;
  }
}
customElements.define("ruler-corner", RulerCorner);

class RulerTop extends HTMLElement {
  constructor() {
    super();
    this.attachShadow({ mode: "open" });
    let marks = "";
    for (let v = 10; v <= 290; v += 10) {
      const x = 1577.6 - (290 - v) * 5.674;
      marks += `<path d="M${x} 0v29M${x + 28.4} 23v6" />`;
      marks += `<text x="${x + 3}" y="11">${v}</text>`;
    }
    this.shadowRoot.innerHTML = `
      <style>
        :host { display: block; grid-column: span 2; background: #fafafa; overflow: hidden; }
        svg { display: block; }
        path { stroke: #c4c4c4; stroke-width: 1; }
        text { font: 9px "DejaVu Sans", sans-serif; fill: #a8a8a8; }
        .base { stroke: #ddd; }
      </style>
      <svg width="1590" height="29">${marks}<path class="base" d="M0 28.500H1590"/></svg>`;
  }
}
customElements.define("ruler-top", RulerTop);

class RulerSide extends HTMLElement {
  constructor() {
    super();
    this.attachShadow({ mode: "open" });
    let marks = "";
    for (let v = 10; v <= 180; v += 10) {
      const y = 12 + (v - 10) * 5.68;
      marks += `<path d="M0 ${y}H30M24 ${y + 28.4}H30" />`;
      marks += `<text transform="translate(10 ${y - 2}) rotate(-90)">${v}</text>`;
    }
    this.shadowRoot.innerHTML = `
      <style>
        :host { display: block; background: #fafafa; overflow: hidden; box-shadow: inset 0 0 0 .500px #e2e2e2; }
        svg { display: block; }
        path { stroke: #c4c4c4; stroke-width: 1; }
        text { font: 9px "DejaVu Sans", sans-serif; fill: #a8a8a8; }
      </style>
      <svg width="30" height="978">${marks}</svg>`;
  }
}
customElements.define("ruler-side", RulerSide);

class EditorArea extends HTMLElement {
  constructor() {
    super();
    this.attachShadow({ mode: "open" });
    this.shadowRoot.innerHTML = `
      <style>
        :host { display: grid; flex: none; margin-left: 1px; grid-template-columns: 30px 1578px 12px; grid-template-rows: 29px 978px 12px; }
      </style>
      <slot></slot>`;
  }
}
customElements.define("editor-area", EditorArea);

class ErdCanvas extends HTMLElement {
  constructor() {
    super();
    this.attachShadow({ mode: "open" });
    const entity = (x, y, w, h, head, cx, divider) => `
      <rect class="body" x="${x}" y="${y}" width="${w}" height="${h}"/>
      <rect class="head" x="${x}" y="${y}" width="${w}" height="${head}"/>
      ${divider ? `<path class="edge" d="M${divider} ${y + head}V${y + h}"/>` : ""}
      <text class="title" x="${x + w / 2}" y="${y + head / 2 + 1}">实体</text>
      <text class="cell" x="${cx}" y="${y + head + 19}">文本</text>
      <text class="cell" x="${cx}" y="${y + head + 48}">文本</text>
      <text class="cell" x="${cx}" y="${y + head + 76}">文本</text>`;
    const oval = (cx, cy, fill) => `
      <ellipse class="edge" cx="${cx}" cy="${cy}" rx="90" ry="53" fill="${fill}"/>
      <text class="cell" x="${cx}" y="${cy + 1}">属性</text>`;
    this.shadowRoot.innerHTML = `
      <style>
        :host { display: block; background: #fff; overflow: hidden; }
        svg { display: block; }
        .edge { stroke: #34506a; stroke-width: 1.800; }
        .link { stroke: #46627a; stroke-width: 1.800; fill: none; }
        .body { fill: #fff; stroke: #34506a; stroke-width: 1.800; }
        .head { fill: #4bacd0; stroke: #34506a; stroke-width: 1.800; }
        text { text-anchor: middle; dominant-baseline: central; font-family: "Noto Sans CJK SC", sans-serif; }
        .title { fill: #fff; font-size: 20px; font-weight: 700; }
        .cell { fill: #333; font-size: 20px; font-weight: 300; }
        .name { text-anchor: start; dominant-baseline: auto; font: 56px "Liberation Sans", sans-serif; fill: #1a1a1a; }
      </style>
      <svg width="1578" height="978" viewBox="451 197 1578 978">
        <path d="M2029 197H1723.500L1685 263 2029 342z" fill="#efe8e5"/>
        <path d="M1680 197H1463L1648 248z" fill="#fcf8f5"/>
        <path d="M2029 342L1818 295 1788 385 2029 431z" fill="#fcf8f5"/>
        <path d="M2029 1093L2009 1100 1991 1175H2029z" fill="#fcf8f5"/>
        <path d="M584 1175L550 1157 481 1175z" fill="#efe8e5"/>
        <path d="M451 1062L508 1118 451 1137z" fill="#fcf8f5"/>

        <rect x="507" y="222" width="24" height="80" fill="#4bacd0" stroke="#e8f4f8"/>
        <rect x="466" y="222" width="24" height="80" fill="#dda3cc" stroke="#f6e8f2"/>
        <text class="name" x="595" y="282">Chen ERD</text>

        <path class="link" d="M1598 456H1445M1697 527V632M1697 746V854M1697 995V1098M1611 689L1111 695M939 695L768 476M939 695L768 754M939 695L768 997"/>
        ${entity(1598, 387, 198, 140, 45, 1732, 1668.5)}
        ${oval(1355, 456, "#dda3cc")}
        <path class="edge" d="M1697 632L1783 689 1697 746 1611 689z" fill="#7dbb85"/>
        <text class="title" x="1697" y="690">关系</text>
        ${entity(1598, 854, 198, 141, 45, 1732, 1668.5)}
        <ellipse class="edge" cx="1697" cy="1152" rx="90" ry="54" fill="#dda3cc"/>
        <text class="cell" x="1697" y="1152">属性</text>
        ${entity(939, 625, 172, 140, 45, 1025)}
        ${oval(677, 475, "#e08b74")}
        ${oval(677, 754, "#e08b74")}
        ${oval(677, 995, "#e08b74")}
      </svg>`;
  }
}
customElements.define("erd-canvas", ErdCanvas);

class SideRail extends HTMLElement {
  constructor() {
    super();
    this.attachShadow({ mode: "open" });
    const names = ["screen", "grid", "layers", "board", "db", "picture", "org", "plan", "flow", "mindmap", "history"];
    this.shadowRoot.innerHTML = `
      <style>
        :host { display: flex; position: relative; flex-direction: column; align-items: center; gap: 6px; width: 57px; margin-left: 2px; padding: 6.500px 1px 0 0; box-sizing: border-box; background: #f4f4f4; }
        .item { width: 48px; height: 48px; display: flex; align-items: center; justify-content: center; flex: none; }
        .on { background: #e0e0e0; }
        .meter { position: absolute; right: 0; top: 120px; width: 15px; height: 89px; background: #4b5661; border-radius: 5px 0 0 5px; }
        .meter i { display: block; margin: 7px 0 0 5px; width: 5px; height: 77px; background:
          repeating-linear-gradient(0deg, transparent 0 2px, rgba(0,0,0,.35) 2px 3px),
          linear-gradient(180deg, #3a3a3a 0 14%, #b9791f 14% 32%, #a8a82f 32% 48%, #5aa06a 48% 60%, #2b8fc0 60% 100%); }
      </style>
      <span class="item"><ui-icon name="chevrons" size="21" tone="ink"></ui-icon></span>
      <span class="item on"><ui-icon name="bucket" size="30" tone="blue"></ui-icon></span>
      ${names.map((n) => `<span class="item"><ui-icon name="${n}" size="27"></ui-icon></span>`).join("")}
      <span class="meter"><i></i></span>`;
  }
}
customElements.define("side-rail", SideRail);

class ZoomSlider extends HTMLElement {
  constructor() {
    super();
    this.attachShadow({ mode: "open" });
    this.shadowRoot.innerHTML = `
      <style>
        :host { display: flex; position: relative; width: 149px; height: 6px; flex: none; background: #e0e0e0; border-radius: 3px; overflow: visible; }
        b { width: 39px; background: #bdbdbd; border-radius: 3px 0 0 3px; }
        i { position: absolute; left: 32px; top: -4px; width: 14px; height: 14px; box-sizing: border-box; background: #fff; border: 3px solid #c6c6c6; border-radius: 50%; }
      </style>
      <b></b><i></i>`;
  }
}
customElements.define("zoom-slider", ZoomSlider);

class StatusBar extends HTMLElement {
  constructor() {
    super();
    this.attachShadow({ mode: "open" });
    this.shadowRoot.innerHTML = `
      <style>
        :host { display: flex; align-items: center; height: 51px; flex: none; box-sizing: border-box; border-top: 2px solid #e2e2e2;
                background: #f4f4f4; padding: 0 37px 0 27px; font: 15px "DejaVu Sans", sans-serif; color: #555; }
        .page { margin-left: 36px; font-size: 16px; }
        .chev { margin-left: 65px; }
        .rule { width: 2px; height: 30px; background: #ddd; margin-left: 37px; }
        .now { margin-left: 24px; font-weight: 700; color: #111; }
        .add { margin-left: 38.500px; }
        .zoom { margin-left: auto; display: flex; align-items: center; }
        .pct { margin-left: 21px; color: #333; }
      </style>
      <svg width="33" height="20" viewBox="0 0 33 20" fill="none" stroke="#777" stroke-width="2"><path d="M1 1v18M32 1v18" stroke="#aaa"/><rect x="7" y="2" width="19" height="16" stroke-width="3"/></svg>
      <span class="page">Page-1</span>
      <svg class="chev" width="14" height="8" viewBox="0 0 14 8" fill="none" stroke="#788" stroke-width="1.400"><path d="M1 1l6 6 6-6"/></svg>
      <span class="rule"></span>
      <span class="now">Page-1</span>
      <svg class="add" width="20" height="20" viewBox="0 0 20 20" stroke="#666" stroke-width="3"><path d="M10 1v18M1 10h18"/></svg>
      <div class="zoom">
        <svg width="18" height="4" viewBox="0 0 18 4" stroke="#666" stroke-width="3"><path d="M0 2h18"/></svg>
        <zoom-slider style="margin-left:8px"></zoom-slider>
        <svg style="margin-left:8px" width="18" height="18" viewBox="0 0 18 18" stroke="#666" stroke-width="3"><path d="M9 0v18M0 9h18"/></svg>
        <span class="pct">100%</span>
        <svg style="margin-left:9px" width="11" height="7" viewBox="0 0 11 7" fill="none" stroke="#555" stroke-width="1.300"><path d="M1 1l4.500 4.500L10 1"/></svg>
        <svg style="margin-left:28px" width="24" height="24" viewBox="0 0 24 24" fill="none" stroke="#777" stroke-width="3"><path d="M1 8V1.500h6.500M16.500 1.500H23V8M23 16v6.500h-6.500M7.500 22.500H1V16"/></svg>
      </div>`;
  }
}
customElements.define("status-bar", StatusBar);
</script>
</body>
</html>
